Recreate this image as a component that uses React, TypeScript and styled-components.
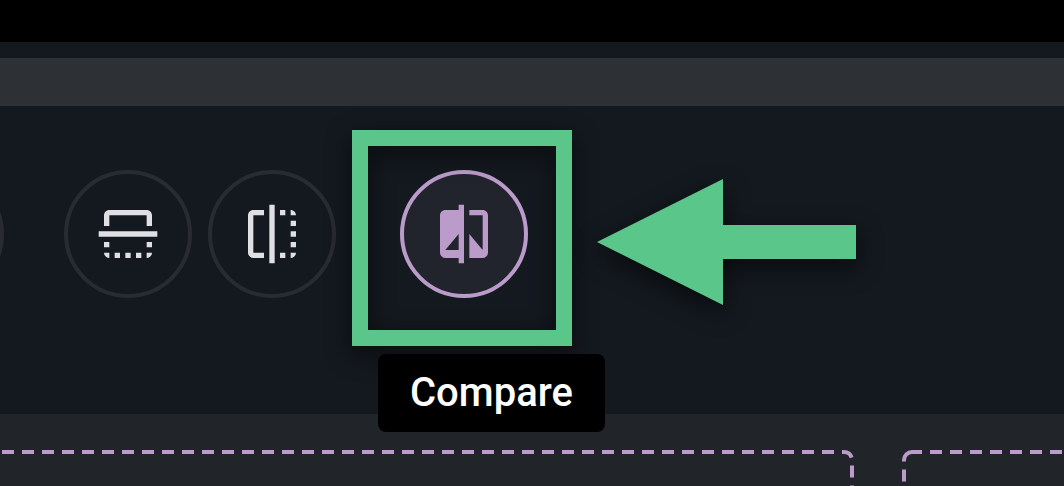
import React from "react";
import styled, { createGlobalStyle } from "styled-components";

const color = {
  green: "#5bc68a",
  lilac: "#ba9bc9",
  ink: "#14191f",
  icon: "#e0dfe3",
};

const GlobalStyle = createGlobalStyle`
  *, *::before, *::after { box-sizing: border-box; }
  body { margin: 0; background: #212529; font-family: Roboto, "Liberation Sans", sans-serif; }
`;

const Page = styled.div`
  display: flex;
  flex-direction: column;
  min-height: 100vh;
  overflow: hidden;
`;

const Bar = styled.div<{ $height: number; $tone: string }>`
  flex: none;
  height: ${(p) => p.$height}px;
  background: ${(p) => p.$tone};
`;

const Toolbar = styled.div`
  position: relative;
  z-index: 1;
  display: flex;
  align-items: flex-start;
  gap: 16px;
  padding: 64px 0 116px;
  background: ${color.ink};
`;

const Item = styled.div<{ $before?: number }>`
  position: relative;
  flex: none;
  margin-left: ${(p) => p.$before ?? 0}px;
`;

const RoundButton = styled.button<{ $active?: boolean }>`
  display: flex;
  align-items: center;
  justify-content: center;
  width: 128px;
  height: 128px;
  padding: 0;
  border: 4px solid ${(p) => (p.$active ? color.lilac : "#292b33")};
  border-radius: 50%;
  background: ${(p) => (p.$active ? "#22242d" : "transparent")};
  color: ${(p) => (p.$active ? color.lilac : color.icon)};
  cursor: pointer;
`;

const Glyph = styled.svg<{ $turned?: boolean }>`
  flex: none;
  width: 64px;
  height: 64px;
  fill: currentColor;
  transform: ${(p) => (p.$turned ? "rotate(90deg)" : "none")};
`;

const Highlight = styled.div`
  position: absolute;
  top: -40px;
  left: -48px;
  width: 220px;
  height: 216px;
  border: 16px solid ${color.green};
  filter: drop-shadow(0 8px 12px rgba(0, 0, 0, 0.6));
  pointer-events: none;
`;

const Arrow = styled.svg`
  position: absolute;
  top: 8px;
  left: 196px;
  width: 260px;
  height: 128px;
  fill: ${color.green};
  overflow: visible;
  filter: drop-shadow(0 8px 12px rgba(0, 0, 0, 0.6));
  pointer-events: none;
`;

const Tooltip = styled.div`
  position: absolute;
  top: 184px;
  left: -22px;
  padding: 15px 32px;
  border-radius: 8px;
  background: #000;
  color: #fff;
  font-size: 40px;
  font-weight: 500;
  line-height: 48px;
  white-space: nowrap;
`;

const Canvas = styled.main`
  flex: 1;
  display: flex;
  gap: 48px;
  padding-top: 36px;
`;

const DropZone = styled.section<{ $grow: number; $align: string }>`
  flex: ${(p) => p.$grow} 1 0;
  display: flex;
  justify-content: ${(p) => p.$align};
  min-width: 0;
  min-height: 36px;
  overflow: hidden;
`;

const Outline = styled.svg`
  flex: none;
  width: 2000px;
  height: 36px;
  fill: none;
  stroke: ${color.lilac};
  stroke-width: 4px;
`;

const FLIP =
  "M15 21h2v-2h-2v2zm4-12h2V7h-2v2zM3 5v14c0 1.1.9 2 2 2h4v-2H5V5h4V3H5c-1.1 0-2 .9-2 2zm16-2v2h2c0-1.1-.9-2-2-2zm-8 20h2V1h-2v22zm8-6h2v-2h-2v2zM15 5h2V3h-2v2zm4 8h2v-2h-2v2zm0 8c1.1 0 2-.9 2-2h-2v2z";
const COMPARE =
  "M10 3H5c-1.1 0-2 .9-2 2v14c0 1.1.9 2 2 2h5v2h2V1h-2v2zm0 15H5l5-6v6zm9-15h-5v2h5v13l-5-6v9h5c1.1 0 2-.9 2-2V5c0-1.1-.9-2-2-2z";

export default function App() {
  return (
    <Page>
      <GlobalStyle />
      <Bar $height={42} $tone="#000" />
      <Bar $height={16} $tone={color.ink} />
      <Bar $height={48} $tone="#2d3034" />
      <Toolbar role="toolbar">
        <Item $before={-124}>
          <RoundButton type="button" />
        </Item>
        <Item $before={44}>
          <RoundButton type="button" aria-label="Flip vertical">
            <Glyph viewBox="0 0 24 24" $turned>
              <path d={FLIP} />
            </Glyph>
          </RoundButton>
        </Item>
        <Item>
          <RoundButton type="button" aria-label="Flip horizontal">
            <Glyph viewBox="0 0 24 24">
              <path d={FLIP} />
            </Glyph>
          </RoundButton>
        </Item>
        <Item $before={48}>
          <RoundButton type="button" $active aria-labelledby="compare-tip">
            <Glyph viewBox="0 0 24 24">
              <path d={COMPARE} />
            </Glyph>
          </RoundButton>
          <Highlight />
          <Arrow viewBox="0 0 260 128">
            <path d="M1 64L127 1V47H260V81H127V127Z" />
          </Arrow>
          <Tooltip role="tooltip" id="compare-tip">
            Compare
          </Tooltip>
        </Item>
      </Toolbar>
      <Canvas>
        <DropZone $grow={854} $align="flex-end">
          <Outline>
            <path d="M8 2H1990a8 8 0 0 1 8 8V36" strokeDasharray="12 8" />
          </Outline>
        </DropZone>
        <DropZone $grow={162} $align="flex-start">
          <Outline>
            <path d="M10 2H2000" strokeDasharray="12 8" strokeDashoffset="2" />
            <path d="M10 2a8 8 0 0 0 -8 8V36" strokeDasharray="14 8 12 8" />
          </Outline>
        </DropZone>
      </Canvas>
    </Page>
  );
}
